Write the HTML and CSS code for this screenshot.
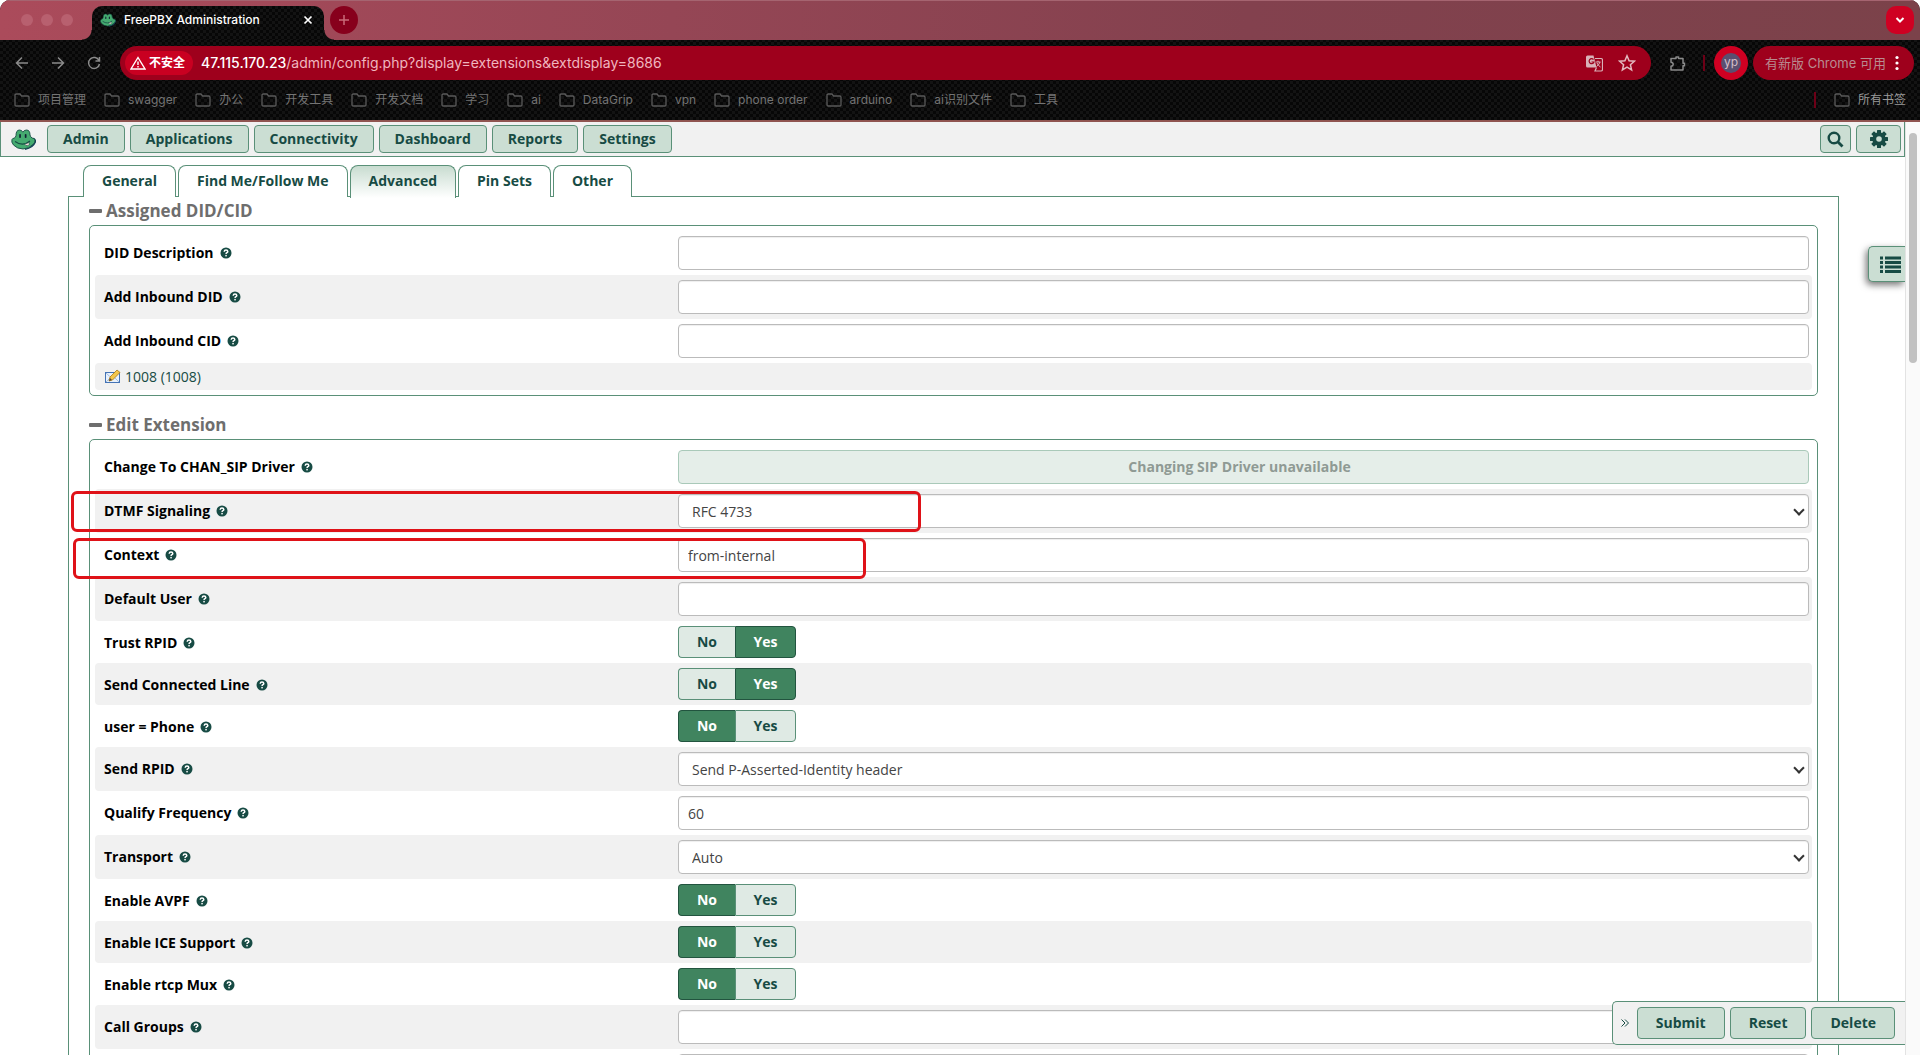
FILE: index.html
```html
<!DOCTYPE html>
<html lang="zh-CN">
<head>
<meta charset="utf-8">
<title>FreePBX Administration</title>
<link rel="stylesheet" href="styles.css">
</head>
<body>
<svg class="defs" aria-hidden="true">
  <symbol id="folder" viewBox="0 0 16 16"><path d="M1 3.200Q1 2 2.200 2H6l1.600 2h6.200Q15 4 15 5.200v7.600q0 1.200-1.200 1.200H2.200Q1 14 1 12.800z" fill="none" stroke="currentColor" stroke-width="1.300"/></symbol>
  <symbol id="help" viewBox="0 0 12 12"><circle cx="6" cy="6" r="5.500" fill="#174b44"/><path d="M4.200 4.700Q4.300 3 6 3t1.800 1.500Q7.800 5.400 6.700 5.800 6.100 6 6.100 7" fill="none" stroke="#fff" stroke-width="1.500"/><rect x="5.300" y="7.900" width="1.500" height="1.500" fill="#fff"/></symbol>
  <symbol id="frog" viewBox="0 0 25 21"><path d="M22.500 9.500q2.500 1.500 1.500 4-2 5-10 6.700" fill="none" stroke="#123f5b" stroke-width="1.600"/><path d="M5 6.500Q5 1 8.500 1q2.500 0 3.300 2.200Q13 1 15.500 1 19 1 19 6q.5 2 2 3 2.500 0 3 2 .3 2.500-2 4.500-4 4.300-10 4.500-6-.2-9.500-4Q0 13 1 10.500 1.500 9.300 3 9.200 4.500 9 5 6.500z" fill="#45ab70" stroke="#174b44" stroke-width=".9"/><rect x="8.200" y="5" width="1.700" height="4" rx=".8" fill="#123"/><rect x="13.800" y="5" width="1.700" height="4" rx=".8" fill="#123"/><path d="M4 12.500q8 5.500 15-.5" fill="none" stroke="#174b44" stroke-width="1.200"/><path d="M13.500 15q2.500-.3 4.500-1.800 1 2.500-.8 3.500-2.500.6-3.700-1.700z" fill="#f3d7d7" stroke="#174b44" stroke-width=".6"/></symbol>
</svg>

<header class="browser">
  <div class="tabstrip">
    <div class="lights"><i></i><i></i><i></i></div>
    <div class="btab"><svg class="favicon"><use href="#frog"/></svg><span class="btab-title">FreePBX Administration</span><button class="plain" aria-label="Close tab"><svg width="10" height="10"><path d="M1.500 1.500l7 7m0-7l-7 7" stroke="#fff" stroke-width="1.700"/></svg></button></div>
    <button class="newtab" aria-label="New tab"><svg width="12" height="12"><path d="M6 1v10M1 6h10" stroke="#c96b78" stroke-width="1.500"/></svg></button>
    <button class="tabmenu" aria-label="Search tabs"><svg width="10" height="8"><path d="M1.500 2L5 5.500 8.500 2" fill="none" stroke="#fff" stroke-width="2"/></svg></button>
  </div>
  <div class="toolbar">
    <button class="plain navi" aria-label="Back"><svg width="14" height="14"><path d="M13 7H1.500M7 1.500L1.500 7 7 12.500" fill="none" stroke="currentColor" stroke-width="1.500"/></svg></button>
    <button class="plain navi" aria-label="Forward"><svg width="14" height="14"><path d="M1 7h11.500M7 1.500L12.500 7 7 12.500" fill="none" stroke="currentColor" stroke-width="1.500"/></svg></button>
    <button class="plain navi" aria-label="Reload"><svg width="14" height="14"><path d="M12 4.500A5.500 5.500 0 1 0 12.500 8M12.500 1v4H8.500" fill="none" stroke="currentColor" stroke-width="1.500"/></svg></button>
    <div class="address">
      <span class="chip"><svg width="16" height="14"><path d="M8 1.500L15 13H1z" fill="none" stroke="#fff" stroke-width="1.400"/><path d="M8 5.500v3.500M8 10v1.500" stroke="#fff" stroke-width="1.400"/></svg>不安全</span>
      <span class="url"><b>47.115.170.23</b>/admin/config.php?display=extensions&amp;extdisplay=8686</span>
      <button class="plain" aria-label="Translate"><svg width="17" height="17"><path d="M1.500 0.500h6l3 12h-9q-1.500 0-1.500-1.500V2Q0 .5 1.500 .5z" fill="#d9b2b8"/><path d="M7.500 4.500A2.500 2.500 0 1 0 8 7H5.500" fill="none" stroke="#9e001c" stroke-width="1.200"/><path d="M9 3.500h6q1.500 0 1.500 1.500v9.500q0 1.500-1.500 1.500H9l1.500-3.500" fill="none" stroke="#d9b2b8" stroke-width="1.200"/><path d="M9.500 7h5M12 5.700V7m2 0q-1 3-3.500 4.500M11 8q1 2.500 3.500 4" fill="none" stroke="#d9b2b8"/></svg></button>
      <button class="plain" aria-label="Bookmark"><svg width="18" height="18"><path d="M9 1.800l2.100 4.900 5.300.5-4 3.500 1.200 5.200L9 13.100l-4.600 2.800 1.200-5.200-4-3.500 5.300-.5z" fill="none" stroke="#e3b9bf" stroke-width="1.500"/></svg></button>
    </div>
    <button class="plain ext" aria-label="Extensions"><svg width="17" height="17"><path d="M2 3.500h5V2h2.500v1.500H14v4.700h1.500v2.500H14V15H2v-3.700q2.200-.2 2.200-2T2 7.200z" fill="none" stroke="#8b8b8b" stroke-width="1.500" stroke-linejoin="round"/></svg></button>
    <i class="sep"></i>
    <button class="avatar" aria-label="Profile"><span>yp</span></button>
    <button class="update">有新版 Chrome 可用<svg width="4" height="16"><g fill="#fff"><circle cx="2" cy="2.500" r="1.600"/><circle cx="2" cy="8" r="1.600"/><circle cx="2" cy="13.500" r="1.600"/></g></svg></button>
  </div>
  <nav class="bookmarks" aria-label="Bookmarks">
    <a href="#"><svg><use href="#folder"/></svg>项目管理</a><a href="#"><svg><use href="#folder"/></svg>swagger</a><a href="#"><svg><use href="#folder"/></svg>办公</a><a href="#"><svg><use href="#folder"/></svg>开发工具</a><a href="#"><svg><use href="#folder"/></svg>开发文档</a><a href="#"><svg><use href="#folder"/></svg>学习</a><a href="#"><svg><use href="#folder"/></svg>ai</a><a href="#"><svg><use href="#folder"/></svg>DataGrip</a><a href="#"><svg><use href="#folder"/></svg>vpn</a><a href="#"><svg><use href="#folder"/></svg>phone order</a><a href="#"><svg><use href="#folder"/></svg>arduino</a><a href="#"><svg><use href="#folder"/></svg>ai识别文件</a><a href="#"><svg><use href="#folder"/></svg>工具</a>
    <i class="sep push"></i><a class="all" href="#"><svg><use href="#folder"/></svg>所有书签</a>
  </nav>
</header>

<div class="viewport">
  <div class="page">
    <nav class="menu" aria-label="Main">
      <svg class="logo"><use href="#frog"/></svg>
      <button class="btn">Admin</button><button class="btn">Applications</button><button class="btn">Connectivity</button><button class="btn">Dashboard</button><button class="btn">Reports</button><button class="btn">Settings</button>
      <button class="btn icon search" aria-label="Search"><svg width="17" height="17"><circle cx="7" cy="7" r="5.300" fill="none" stroke="currentColor" stroke-width="2.400"/><path d="M11 11l4.500 4.500" stroke="currentColor" stroke-width="2.800"/></svg></button>
      <button class="btn icon gear" aria-label="Settings"><svg width="18" height="18" viewBox="-9 -9 18 18"><g fill="currentColor"><rect x="-2" y="-9" width="4" height="18" rx=".5"/><rect x="-9" y="-2" width="18" height="4" rx=".5"/><rect x="-2" y="-9" width="4" height="18" rx=".5" transform="rotate(45)"/><rect x="-2" y="-9" width="4" height="18" rx=".5" transform="rotate(-45)"/></g><circle r="4.700" fill="none" stroke="currentColor" stroke-width="4"/><circle r="2.800" fill="#cbded3"/></svg></button>
    </nav>

    <main class="content">
      <div class="tabs" role="tablist">
        <button role="tab">General</button><button role="tab">Find Me/Follow Me</button><button role="tab" aria-selected="true" class="on">Advanced</button><button role="tab">Pin Sets</button><button role="tab">Other</button>
      </div>
      <form class="panel">
        <h3><i class="minus"></i>Assigned DID/CID</h3>
        <section class="box">
          <div class="row"><label for="did">DID Description<svg><use href="#help"/></svg></label><input id="did" type="text"></div>
          <div class="row"><label for="idid">Add Inbound DID<svg><use href="#help"/></svg></label><input id="idid" type="text"></div>
          <div class="row"><label for="icid">Add Inbound CID<svg><use href="#help"/></svg></label><input id="icid" type="text"></div>
          <div class="row linkrow"><a href="#"><svg width="16" height="16"><rect x=".5" y="3.500" width="14" height="10" fill="#e8f1fc" stroke="#4473b5"/><path d="M1 4l6.500 6L14 4M1 13l5-5m8 5L9 8" fill="none" stroke="#a5bfe0"/><path d="M4 12l1-4 7-7 3 2.500-7.500 7.500z" fill="#f3c64c" stroke="#a97817" stroke-width=".8"/><path d="M4 12l1-3 2 2z" fill="#5b4630"/></svg>1008 (1008)</a></div>
        </section>
        <h3 class="second"><i class="minus"></i>Edit Extension</h3>
        <section class="box">
          <div class="row"><label for="drv">Change To CHAN_SIP Driver<svg><use href="#help"/></svg></label><button id="drv" type="button" class="driver" disabled>Changing SIP Driver unavailable</button></div>
          <div class="row"><i class="mark mark-a"></i><label for="dtmf">DTMF Signaling<svg><use href="#help"/></svg></label><span class="select"><select id="dtmf"><option>RFC 4733</option></select></span></div>
          <div class="row"><i class="mark mark-b"></i><label for="ctx">Context<svg><use href="#help"/></svg></label><input id="ctx" type="text" value="from-internal"></div>
          <div class="row"><label for="du">Default User<svg><use href="#help"/></svg></label><input id="du" type="text"></div>
          <div class="row"><span class="label">Trust RPID<svg><use href="#help"/></svg></span><span class="toggle"><input type="radio" name="t1" id="t1n"><label for="t1n">No</label><input type="radio" name="t1" id="t1y" checked><label for="t1y">Yes</label></span></div>
          <div class="row"><span class="label">Send Connected Line<svg><use href="#help"/></svg></span><span class="toggle"><input type="radio" name="t2" id="t2n"><label for="t2n">No</label><input type="radio" name="t2" id="t2y" checked><label for="t2y">Yes</label></span></div>
          <div class="row"><span class="label">user = Phone<svg><use href="#help"/></svg></span><span class="toggle"><input type="radio" name="t3" id="t3n" checked><label for="t3n">No</label><input type="radio" name="t3" id="t3y"><label for="t3y">Yes</label></span></div>
          <div class="row"><label for="rpid">Send RPID<svg><use href="#help"/></svg></label><span class="select"><select id="rpid"><option>Send P-Asserted-Identity header</option></select></span></div>
          <div class="row"><label for="qf">Qualify Frequency<svg><use href="#help"/></svg></label><input id="qf" type="text" value="60"></div>
          <div class="row"><label for="tr">Transport<svg><use href="#help"/></svg></label><span class="select"><select id="tr"><option>Auto</option></select></span></div>
          <div class="row"><span class="label">Enable AVPF<svg><use href="#help"/></svg></span><span class="toggle"><input type="radio" name="t4" id="t4n" checked><label for="t4n">No</label><input type="radio" name="t4" id="t4y"><label for="t4y">Yes</label></span></div>
          <div class="row"><span class="label">Enable ICE Support<svg><use href="#help"/></svg></span><span class="toggle"><input type="radio" name="t5" id="t5n" checked><label for="t5n">No</label><input type="radio" name="t5" id="t5y"><label for="t5y">Yes</label></span></div>
          <div class="row"><span class="label">Enable rtcp Mux<svg><use href="#help"/></svg></span><span class="toggle"><input type="radio" name="t6" id="t6n" checked><label for="t6n">No</label><input type="radio" name="t6" id="t6y"><label for="t6y">Yes</label></span></div>
          <div class="row"><label for="cg">Call Groups<svg><use href="#help"/></svg></label><input id="cg" type="text"></div>
          <div class="row"><span class="label"></span><input type="text" aria-label="Pickup Groups"></div>
        </section>
      </form>
    </main>

    <button class="sidelist" aria-label="Extension list"><svg width="21" height="17"><path d="M0 2h3M5 2h16M0 6.500h3M5 6.500h16M0 11h3M5 11h16M0 15.500h3M5 15.500h16" stroke="currentColor" stroke-width="2.800"/></svg></button>
    <div class="actions"><button class="plain more" aria-label="Collapse"><svg width="8" height="8"><path d="M.5 .5L4 4 .5 7.500M4 .5L7.500 4 4 7.500" fill="none" stroke="#174b44"/></svg></button><button class="btn">Submit</button><button class="btn">Reset</button><button class="btn">Delete</button></div>
  </div>
  <div class="scroll"><i></i></div>
</div>
</body>
</html>
```

FILE: styles.css
```css
* { box-sizing: border-box; }
html, body { height: 100%; }
body { margin: 0; display: flex; flex-direction: column; overflow: hidden; background: #fff; color: #000; font: 14px/20px "Open Sans", "Noto Sans", sans-serif; }
button, input, select { font: inherit; margin: 0; }
svg { flex: none; display: block; }
a { text-decoration: none; }
.defs { position: absolute; width: 0; height: 0; }
.plain { background: none; border: 0; padding: 0; display: flex; color: inherit; }

/* browser window */
.browser { flex: none; border-radius: 10px 10px 0 0; overflow: hidden; background: repeating-conic-gradient(#131313 0 25%, #070707 0 50%) 0 0 / 6px 6px; border-bottom: 2px solid #8f5450; font-family: Inter, "Noto Sans CJK SC", sans-serif; }
.tabstrip { height: 40px; display: flex; align-items: center; background: linear-gradient(90deg, #ab4b5b, #954655 35%, #83414e 65%, #7b424a); box-shadow: inset 0 1px #a56470; padding: 0 6px 0 21px; }
.lights { display: flex; gap: 8px; width: 71px; }
.lights i { width: 12px; height: 12px; border-radius: 50%; background: #b8606f; }
.btab { position: relative; align-self: flex-end; height: 34px; width: 232px; border-radius: 10px 10px 0 0; display: flex; align-items: center; padding: 0 11px 6px 8px; background: repeating-conic-gradient(#131313 0 25%, #070707 0 50%) 0 0 / 6px 6px; color: #fff; font-size: 12px; font-weight: 500; }
.btab::before, .btab::after { content: ""; position: absolute; bottom: 0; width: 10px; height: 10px; }
.btab::before { right: 100%; background: radial-gradient(circle at 0 0, transparent 9px, #0d0d0d 10px); }
.btab::after { left: 100%; background: radial-gradient(circle at 100% 0, transparent 9px, #0d0d0d 10px); }
.favicon { width: 16px; height: 14px; margin-right: 8px; }
.btab-title { flex: 1; }
.newtab { width: 28px; height: 28px; border-radius: 50%; border: 0; background: #87001c; margin-left: 6px; padding: 0; display: grid; place-items: center; }
.tabmenu { width: 28px; height: 28px; border-radius: 10px; border: 0; background: #cf0022; margin-left: auto; padding: 0; display: grid; place-items: center; }
.toolbar { height: 46px; display: flex; align-items: center; padding: 0 6px 0 15px; color: #8b8b8b; }
.navi { margin-right: 22px; }
.navi:nth-child(3) { margin-right: 19px; }
.address { flex: 1; height: 34px; border-radius: 17px; background: #9e001c; display: flex; align-items: center; gap: 15px; padding: 0 15px 0 5px; margin-right: 18px; }
.chip { height: 24px; border-radius: 12px; background: #c90021; color: #fff; display: flex; align-items: center; gap: 3px; padding: 0 8px 0 5px; font-size: 12px; font-weight: 700; margin-right: -7px; }
.url { flex: 1; font-size: 14px; color: #f0b6bf; }
.url b { font-weight: 500; color: #fff; }
.ext { margin-right: 17px; }
.sep { width: 2px; height: 16px; background: #6d0017; }
.avatar { width: 34px; height: 34px; border-radius: 50%; border: 0; background: #cf0022; padding: 0; margin: 0 5px 0 9px; display: grid; place-items: center; }
.avatar span { width: 20px; height: 20px; border-radius: 50%; background: #5b4f70; color: #d5bfc9; font-size: 12px; line-height: 18px; }
.update { height: 34px; border-radius: 17px; border: 0; background: #9e001c; color: #b98b90; display: flex; align-items: center; justify-content: space-between; width: 161px; white-space: nowrap; padding: 0 15px 0 12px; font-size: 13px; }
.bookmarks { height: 34px; display: flex; align-items: center; padding: 0 14px 6px; gap: 18px; font-size: 12px; }
.bookmarks a { display: flex; align-items: center; gap: 8px; color: #747474; }
.bookmarks a svg { width: 16px; height: 16px; color: #5a5a5a; }
.push { margin-left: auto; }
.bookmarks .all { color: #999; }

/* page */
.viewport { flex: 1; min-height: 0; display: flex; }
.page { flex: 1; position: relative; overflow: hidden; }
.scroll { width: 15px; border-left: 1px solid #e3e3e3; background: #fafafa; padding: 11px 3px; }
.scroll i { display: block; height: 230px; width: 8px; border-radius: 4px; background: #c1c1c1; }
.menu { display: flex; align-items: center; gap: 5px; height: 35px; padding: 0 3px 0 10px; background: #f1f1f1; border: 1px solid #5a9078; border-top: 0; }
.logo { width: 25px; height: 21px; margin-right: 6px; }
.btn { background: #cbded3; border: 1px solid #5a9078; border-radius: 4px; color: #174b44; font-weight: 700; padding: 3px 15px; line-height: 20px; }
.icon { height: 28px; padding: 0; display: grid; place-items: center; }
.search { width: 31px; margin-left: auto; }
.gear { width: 45px; }
.content { padding: 8px 66px 0 68px; }
.tabs { display: flex; gap: 2px; padding-left: 15px; }
.tabs button { height: 32px; padding: 0 18px 2px; border: 1px solid #5a9078; border-bottom: 0; border-radius: 8px 8px 0 0; background: #fff; color: #174b44; font-weight: 700; }
.tabs .on { position: relative; z-index: 1; background: linear-gradient(#c8dcd0, #fff); padding-bottom: 3px; margin-bottom: -1px; height: 33px; }
.panel { border: 1px solid #5a9078; padding: 0 20px; margin-top: -1px; }
h3 { margin: 0; font-size: 17px; line-height: 28px; color: #6e6e6e; display: flex; align-items: center; gap: 4px; font-weight: 700; }
.second { margin-top: 15px; }
.minus { width: 13px; height: 4px; border-radius: 1px; background: #6e6e6e; }
.box { border: 1px solid #5a9078; border-radius: 5px; padding: 5px; }
.row { position: relative; display: grid; grid-template-columns: 574fr 1131fr; align-items: center; padding: 5px 3px 5px 9px; border-radius: 4px; }
.row:nth-child(even) { background: #f1f1f1; }
.row > label, .label { display: flex; align-items: center; gap: 6px; font-weight: 700; }
.label { padding-top: 2px; }
.row > label svg, .label svg { width: 12px; height: 12px; }
.row input[type=text], select, .driver { width: 100%; height: 34px; border: 1px solid #bbb; border-radius: 4px; background: #fff; color: #444; padding: 0 9px; box-shadow: inset 0 1px 1px #eee; }
select { appearance: none; display: block; }
.select select { padding: 1px 13px 0; }
.select { position: relative; }
.select::after { content: ""; position: absolute; right: 6px; top: 12px; width: 6px; height: 6px; border: solid #333; border-width: 0 2px 2px 0; transform: rotate(45deg); }
.row .driver { background: #e5eee9; border-color: #a9c9b9; color: #8f9a94; font-weight: 700; box-shadow: none; padding: 0 12px 0 4px; }
.row.linkrow { padding: 3px 10px; height: 27px; }
.linkrow a { display: flex; align-items: center; gap: 4px; color: #174b44; line-height: 18px; }
.toggle { display: flex; }
.toggle input { position: absolute; opacity: 0; }
.toggle label { height: 32px; line-height: 30px; width: 57px; text-align: center; border: 1px solid #5a9078; border-radius: 4px 0 0 4px; border-right: 0; background: #dfeae4; color: #174b44; font-weight: 700; }
.toggle label:last-child { width: 61px; border-radius: 0 4px 4px 0; border-right: 1px solid #5a9078; }
.toggle input:checked + label { background: #40845f; border-color: #22543f; color: #fff; }
.mark { position: absolute; z-index: 2; border: 3px solid #df1218; border-radius: 6px; pointer-events: none; height: 41px; }
.mark-a { left: -24px; top: 2px; width: 850px; }
.mark-b { left: -22px; top: 5px; width: 793px; }
.sidelist { position: absolute; right: 0; top: 124px; width: 37px; height: 36px; border: 1px solid #5a9078; border-right: 0; border-radius: 5px 0 0 5px; background: #cbded3; color: #174b44; box-shadow: -2px 3px 7px #777; padding: 0 0 0 11px; }
.actions { position: absolute; z-index: 3; right: 0; bottom: 10px; display: flex; align-items: center; gap: 5px; height: 44px; padding: 0 10px 0 8px; background: #f1f1f1; border: 1px solid #5a9078; border-right: 0; border-radius: 5px 0 0 5px; }
.actions .btn { height: 32px; padding: 0 18px; }
.more { margin-right: 3px; }
```
